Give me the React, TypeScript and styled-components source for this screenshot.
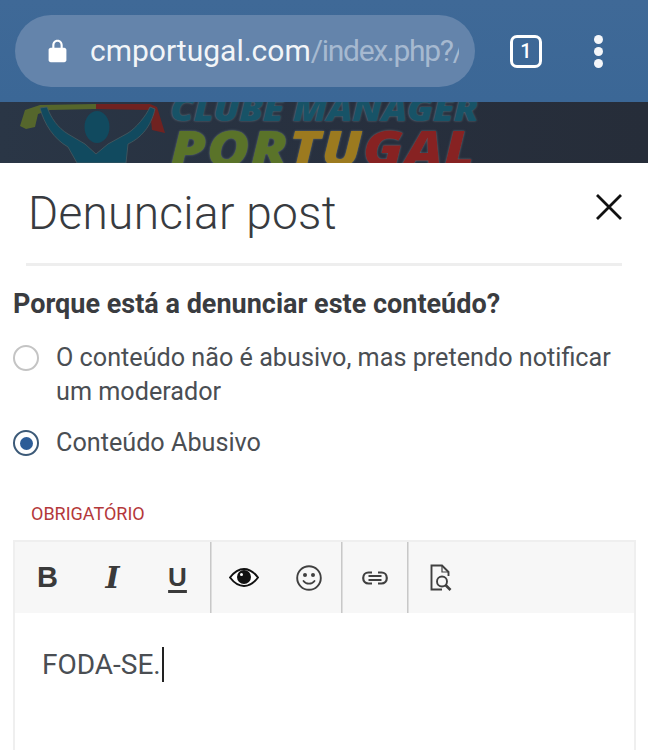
import React from "react";
import styled, { createGlobalStyle } from "styled-components";

const GlobalStyle = createGlobalStyle`
  html, body {
    margin: 0;
    padding: 0;
    background: #fff;
    overflow: hidden;
  }
  * { box-sizing: border-box; }
`;

const App: React.FC = () => {
  return (
    <Page>
      <GlobalStyle />
      <BrowserBar>
        <UrlPill>
          <LockIcon viewBox="0 0 16 20">
            <path d="M8 0.5C5.2 0.5 3.6 2.6 3.6 5.2V7.2H2.4C1.3 7.2 0.5 8 0.5 9.1V17.6C0.5 18.7 1.3 19.5 2.4 19.5H13.6C14.7 19.5 15.5 18.7 15.5 17.6V9.1C15.5 8 14.7 7.2 13.6 7.2H12.4V5.2C12.4 2.6 10.8 0.5 8 0.5ZM5.4 7.2V5.2C5.4 3.6 6.4 2.3 8 2.3C9.6 2.3 10.6 3.6 10.6 5.2V7.2H5.4Z" fill="#fff" fillRule="evenodd" />
          </LockIcon>
          <UrlText>
            cmportugal.com<UrlPath>/index.php?/</UrlPath>
          </UrlText>
        </UrlPill>
        <TabCount>1</TabCount>
        <MenuDots>
          <Dot />
          <Dot />
          <Dot />
        </MenuDots>
      </BrowserBar>

      <Banner>
        <FanLogo viewBox="0 0 170 61">
          <path d="M20 24L25 8L40 3L96 2V7L50 8L38 12L35 25L26 27Z" fill="#55662c" />
          <path d="M96 2H150L157 5L165 31L152 28L150 8L96 7Z" fill="#702221" />
          <path d="M40 6L47 5C51 16 58 26 68 32L85 42L96 52L108 42L128 31C136 26 146 14 150 5L155 7C152 20 145 34 128 42L126 61H77L68 45C54 37 44 22 40 6Z" fill="#114a5f" stroke="#47595f" strokeWidth="0.8" />
          <ellipse cx="97" cy="25" rx="12.5" ry="16" fill="#114a5f" />
        </FanLogo>
        <LogoText>
          <LogoTop>CLUBE MANAGER</LogoTop>
          <LogoBottom>
            <LogoPart $color="#5a7329">POR</LogoPart>
            <LogoPart $color="#9c7a1f">TU</LogoPart>
            <LogoPart $color="#872222">GAL</LogoPart>
          </LogoBottom>
        </LogoText>
      </Banner>

      <Sheet>
        <SheetHeader>
          <Title>Denunciar post</Title>
          <CloseIcon viewBox="0 0 28 28">
            <path d="M2 2L26 26M26 2L2 26" stroke="#111" strokeWidth="2.8" fill="none" />
          </CloseIcon>
        </SheetHeader>
        <Divider />

        <Question>Porque está a denunciar este conteúdo?</Question>

        <Options>
          <Option>
            <Radio />
            <OptionLabel>
              O conteúdo não é abusivo, mas pretendo notificar um moderador
            </OptionLabel>
          </Option>
          <Option>
            <Radio $checked />
            <OptionLabel>Conteúdo Abusivo</OptionLabel>
          </Option>
        </Options>

        <RequiredLabel>OBRIGATÓRIO</RequiredLabel>

        <Editor>
          <Toolbar>
            <ToolGroup>
              <ToolButton>
                <BoldGlyph>B</BoldGlyph>
              </ToolButton>
              <ToolButton>
                <ItalicGlyph>I</ItalicGlyph>
              </ToolButton>
              <ToolButton>
                <UnderlineGlyph>U</UnderlineGlyph>
              </ToolButton>
            </ToolGroup>
            <ToolGroup>
              <ToolButton>
                <svg width="30" height="19" viewBox="0 0 30 19">
                  <path d="M1 9.5C6 3 10 1 15 1C20 1 24 3 29 9.5C24 16 20 18 15 18C10 18 6 16 1 9.5Z" fill="#fff" stroke="#111" strokeWidth="2" />
                  <circle cx="15" cy="9" r="7" fill="#111" />
                  <circle cx="12.5" cy="6.5" r="1.5" fill="#fff" />
                </svg>
              </ToolButton>
              <ToolButton>
                <svg width="26" height="26" viewBox="0 0 26 26">
                  <circle cx="13" cy="13" r="11.8" fill="none" stroke="#404040" strokeWidth="1.9" />
                  <circle cx="9" cy="10" r="2" fill="#404040" />
                  <circle cx="17" cy="10" r="2" fill="#404040" />
                  <path d="M7.5 16C10 19.6 16 19.6 18.5 16" fill="none" stroke="#404040" strokeWidth="1.8" strokeLinecap="round" />
                </svg>
              </ToolButton>
            </ToolGroup>
            <ToolGroup>
              <ToolButton>
                <svg width="26" height="14" viewBox="0 0 26 14">
                  <path d="M10 1.5H6.5C3.5 1.5 1.2 3.9 1.2 7C1.2 10.1 3.5 12.5 6.5 12.5H10M16 1.5H19.5C22.5 1.5 24.8 3.9 24.8 7C24.8 10.1 22.5 12.5 19.5 12.5H16" fill="none" stroke="#404040" strokeWidth="2.2" />
                  <path d="M6.5 5H19.5M6.5 9H19.5" stroke="#404040" strokeWidth="1.8" />
                </svg>
              </ToolButton>
            </ToolGroup>
            <ToolGroup $last>
              <ToolButton>
                <svg width="22" height="27" viewBox="0 0 22 27">
                  <path d="M12 25.5H1.5V1.5H12L18.5 8V12" fill="none" stroke="#404040" strokeWidth="1.9" />
                  <path d="M12 1.5V8H18.5" fill="none" stroke="#404040" strokeWidth="1.2" />
                  <circle cx="12" cy="17.5" r="5" fill="none" stroke="#404040" strokeWidth="1.9" />
                  <path d="M15.5 21L20.5 26" stroke="#404040" strokeWidth="2.6" />
                </svg>
              </ToolButton>
            </ToolGroup>
          </Toolbar>
          <EditorBody>
            FODA-SE.
            <Caret />
          </EditorBody>
        </Editor>
      </Sheet>
    </Page>
  );
};

const Page = styled.div`
  width: 648px;
  height: 750px;
  overflow: hidden;
  font-family: Roboto, "Liberation Sans", sans-serif;
  background: #fff;
`;

const BrowserBar = styled.div`
  height: 102px;
  padding: 15px 0 15px 15px;
  display: flex;
  align-items: center;
  background: linear-gradient(#3f6997, #3b6796);
`;

const UrlPill = styled.div`
  width: 460px;
  height: 72px;
  padding: 0 16px 0 33px;
  border-radius: 36px;
  background: #6484ab;
  display: flex;
  align-items: center;
  gap: 23px;
  overflow: hidden;
`;

const LockIcon = styled.svg`
  width: 19px;
  height: 24px;
  flex: none;
  margin-bottom: 1px;
`;

const UrlText = styled.div`
  color: #f2f5f8;
  font-size: 30px;
  line-height: 36px;
  white-space: nowrap;
  overflow: hidden;
`;

const UrlPath = styled.span`
  color: #a6b9d0;
  letter-spacing: -1.3px;
`;

const TabCount = styled.div`
  width: 32px;
  height: 33px;
  margin-left: 35px;
  border: 3px solid #fff;
  border-radius: 7px;
  color: #fff;
  font-size: 20px;
  font-weight: 500;
  display: flex;
  align-items: center;
  justify-content: center;
`;

const MenuDots = styled.div`
  margin-left: 52px;
  display: flex;
  flex-direction: column;
  gap: 3px;
`;

const Dot = styled.div`
  width: 9px;
  height: 9px;
  border-radius: 50%;
  background: #f4f6f9;
`;

const Banner = styled.div`
  height: 61px;
  background: linear-gradient(90deg, #2a3646, #272f3d 60%, #262d39);
  display: flex;
  align-items: flex-start;
  overflow: hidden;
`;

const FanLogo = styled.svg`
  width: 170px;
  height: 61px;
  flex: none;
`;

const LogoText = styled.div`
  margin-top: -9px;
  font-family: "Open Sans", "Liberation Sans", sans-serif;
  font-weight: 800;
  font-style: italic;
  white-space: nowrap;
  text-shadow: 0 0 2px #6a7882;
  transform-origin: left top;
  transform: scaleX(1.16);
`;

const LogoTop = styled.div`
  color: #175367;
  font-size: 32.7px;
  line-height: 31px;
  letter-spacing: -0.4px;
`;

const LogoBottom = styled.div`
  font-size: 50px;
  line-height: 48px;
  letter-spacing: 0.6px;
`;

const LogoPart = styled.span<{ $color: string }>`
  color: ${(p) => p.$color};
`;

const Sheet = styled.div`
  padding: 0 13px;
  background: #fff;
`;

const SheetHeader = styled.div`
  height: 100px;
  padding: 0 12px 0 15px;
  display: flex;
  align-items: center;
  justify-content: space-between;
`;

const Title = styled.h1`
  margin: 0;
  font-size: 46px;
  font-weight: 300;
  color: #383b40;
  letter-spacing: 0.3px;
`;

const CloseIcon = styled.svg`
  width: 28px;
  height: 28px;
  margin-bottom: 12px;
`;

const Divider = styled.div`
  height: 3px;
  margin: 0 13px;
  background: #eeeeee;
`;

const Question = styled.h2`
  margin: 23px 0 0;
  font-size: 27px;
  line-height: 30px;
  font-weight: 700;
  color: #3a3c40;
  white-space: nowrap;
`;

const Options = styled.div`
  margin-top: 22px;
  display: flex;
  flex-direction: column;
  gap: 17px;
`;

const Option = styled.div`
  display: flex;
  align-items: flex-start;
  gap: 17px;
`;

const Radio = styled.div<{ $checked?: boolean }>`
  width: 26px;
  height: 26px;
  margin-top: 4px;
  flex: none;
  border-radius: 50%;
  background: #fff;
  border: 2px solid ${(p) => (p.$checked ? "#3c5a78" : "#c4c4c4")};
  display: flex;
  align-items: center;
  justify-content: center;

  &::after {
    content: "";
    display: ${(p) => (p.$checked ? "block" : "none")};
    width: 13px;
    height: 13px;
    border-radius: 50%;
    background: #2c5c97;
  }
`;

const OptionLabel = styled.div`
  width: 570px;
  font-size: 25.2px;
  line-height: 34px;
  color: #4a4e53;
`;

const RequiredLabel = styled.div`
  margin: 43px 0 0 18px;
  font-size: 18px;
  line-height: 22px;
  color: #b4383a;
`;

const Editor = styled.div`
  margin-top: 15px;
  width: 623px;
  height: 240px;
  border: 2px solid #efefef;
  border-bottom: none;
`;

const Toolbar = styled.div`
  height: 71px;
  display: flex;
  background: #f7f7f7;
`;

const ToolGroup = styled.div<{ $last?: boolean }>`
  display: flex;
  align-items: center;
  border-right: ${(p) => (p.$last ? "none" : "1px solid #c8c8c8")};
  box-shadow: ${(p) => (p.$last ? "none" : "1px 0 0 #dedede")};
`;

const ToolButton = styled.div`
  width: 65px;
  height: 40px;
  display: flex;
  align-items: center;
  justify-content: center;
`;

const BoldGlyph = styled.span`
  font-family: "Liberation Sans", sans-serif;
  font-size: 29px;
  font-weight: 700;
  color: #3a3a3a;
`;

const ItalicGlyph = styled.span`
  font-family: "DejaVu Serif", serif;
  font-size: 30px;
  font-weight: 700;
  font-style: italic;
  color: #3a3a3a;
`;

const UnderlineGlyph = styled.span`
  font-family: "Liberation Sans", sans-serif;
  font-size: 26px;
  font-weight: 700;
  color: #3a3a3a;
  text-decoration: underline;
  text-decoration-thickness: 3px;
  text-underline-offset: 4px;
`;

const EditorBody = styled.div`
  height: 102px;
  padding-left: 27px;
  display: flex;
  align-items: center;
  font-size: 28px;
  color: #4a4e53;
  background: #fff;
`;

const Caret = styled.span`
  width: 2px;
  height: 35px;
  background: #222;
  margin-left: 1px;
`;

export default App;
